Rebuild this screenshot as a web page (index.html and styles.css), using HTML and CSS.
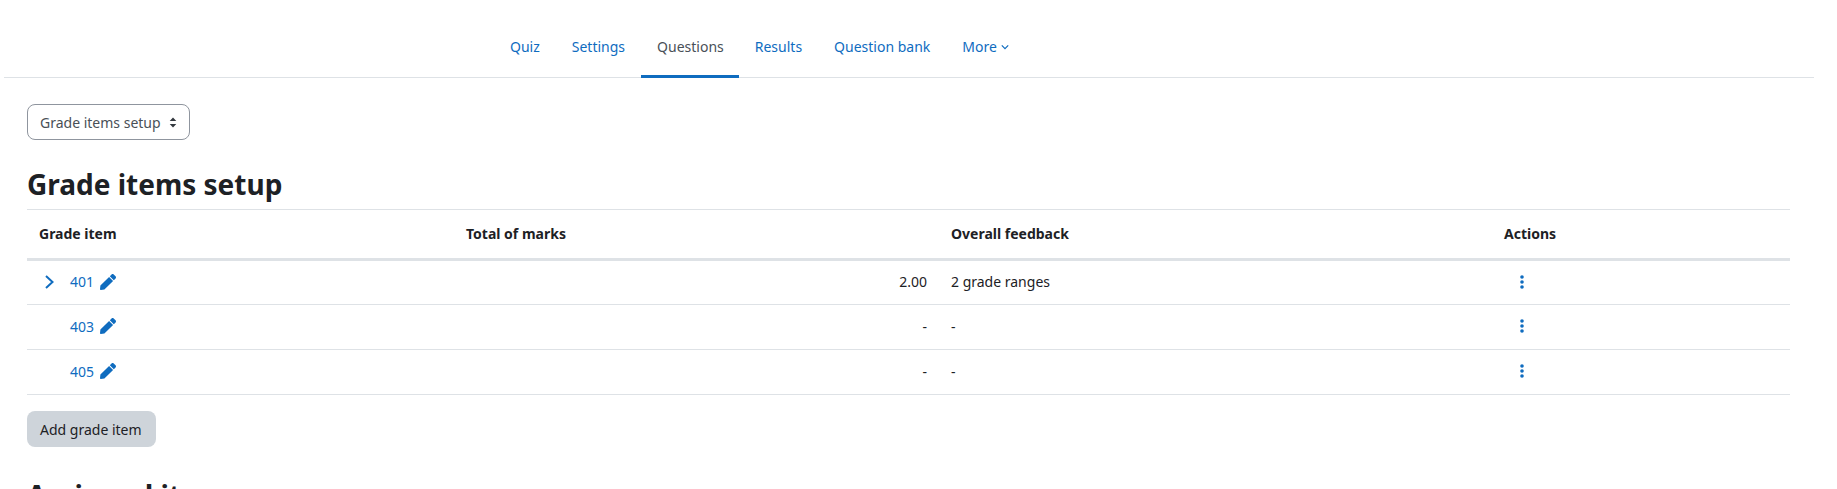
FILE: index.html
```html
<!DOCTYPE html>
<html lang="en">
<head>
<meta charset="utf-8">
<title>Grade items setup</title>
<link rel="stylesheet" href="styles.css">
</head>
<body>
<nav class="tabs">
  <a class="tab" href="#">Quiz</a>
  <a class="tab" href="#">Settings</a>
  <a class="tab active" href="#">Questions</a>
  <a class="tab" href="#">Results</a>
  <a class="tab" href="#">Question bank</a>
  <a class="tab" href="#">More <svg class="caret" viewBox="0 0 10 10" width="8" height="8"><path d="M1 3l4 4 4-4" fill="none" stroke="currentColor" stroke-width="1.5"/></svg></a>
</nav>
<main class="content">
  <button class="select">Grade items setup
    <svg class="updown" viewBox="0 0 10 14" width="8" height="11"><path d="M5 0.5L9.2 5H0.8zM5 13.5L0.8 9H9.2z" fill="#343a40"/></svg>
  </button>
  <h2 class="title">Grade items setup</h2>
  <table class="grades">
    <thead>
      <tr><th class="c1">Grade item</th><th class="c2">Total of marks</th><th class="c3">Overall feedback</th><th>Actions</th></tr>
    </thead>
    <tbody>
      <tr>
        <td><span class="item"><span class="exp"><svg viewBox="0 0 12 16" width="12" height="16"><path d="M3 2l6.500 6-6.500 6" fill="none" stroke="#0f6cbf" stroke-width="2"/></svg></span><a href="#">401</a><svg class="pen" viewBox="0 0 512 512" width="16" height="16"><path d="M290.7 93.2l128 128-278 278-114.100 12.600c-15.300 1.700-28.200-11.200-26.500-26.500l12.700-114.200zM497.900 74.200l-60.100-60.100c-18.700-18.700-49.100-18.700-67.900 0l-56.500 56.500 128 128 56.500-56.500c18.800-18.800 18.800-49.200 0-67.900z" fill="#0f6cbf"/></svg></span></td>
        <td class="num">2.00</td><td>2 grade ranges</td>
        <td><svg class="dots" viewBox="0 0 4 14" width="4" height="14"><circle cx="2" cy="2" r="1.8"/><circle cx="2" cy="7" r="1.8"/><circle cx="2" cy="12" r="1.8"/></svg></td>
      </tr>
      <tr>
        <td><span class="item"><span class="exp"></span><a href="#">403</a><svg class="pen" viewBox="0 0 512 512" width="16" height="16"><path d="M290.7 93.2l128 128-278 278-114.100 12.600c-15.300 1.700-28.200-11.200-26.500-26.500l12.700-114.200zM497.900 74.200l-60.100-60.100c-18.700-18.700-49.100-18.700-67.900 0l-56.500 56.500 128 128 56.500-56.500c18.800-18.800 18.800-49.200 0-67.900z" fill="#0f6cbf"/></svg></span></td>
        <td class="num">-</td><td>-</td>
        <td><svg class="dots" viewBox="0 0 4 14" width="4" height="14"><circle cx="2" cy="2" r="1.8"/><circle cx="2" cy="7" r="1.8"/><circle cx="2" cy="12" r="1.8"/></svg></td>
      </tr>
      <tr>
        <td><span class="item"><span class="exp"></span><a href="#">405</a><svg class="pen" viewBox="0 0 512 512" width="16" height="16"><path d="M290.7 93.2l128 128-278 278-114.100 12.600c-15.300 1.700-28.200-11.200-26.500-26.500l12.700-114.200zM497.900 74.200l-60.100-60.100c-18.700-18.700-49.100-18.700-67.900 0l-56.500 56.500 128 128 56.500-56.500c18.800-18.800 18.800-49.200 0-67.900z" fill="#0f6cbf"/></svg></span></td>
        <td class="num">-</td><td>-</td>
        <td><svg class="dots" viewBox="0 0 4 14" width="4" height="14"><circle cx="2" cy="2" r="1.8"/><circle cx="2" cy="7" r="1.8"/><circle cx="2" cy="12" r="1.8"/></svg></td>
      </tr>
    </tbody>
  </table>
  <button class="add">Add grade item</button>
  <h2 class="title second">Assigned items</h2>
</main>
</body>
</html>
```
FILE: styles.css
```css
html, body { margin: 0; padding: 0; height: 489px; overflow: hidden; background: #fff; }
body { font-family: "Noto Sans", sans-serif; font-size: 14px; color: #1d2125; }
.tabs { margin: 0 23px 0 4px; height: 77px; border-bottom: 1px solid #dee2e6; display: flex; align-items: stretch; padding-left: 490px; box-sizing: content-box; }
.tab { display: flex; align-items: center; gap: 4px; padding: 17px 16px 0; text-decoration: none; color: #0f6cbf; border-bottom: 3px solid transparent; margin-bottom: -1px; }
.tab.active { color: #495057; border-bottom-color: #0f6cbf; padding-right: 15px; }
.caret { margin-top: 2px; }
.content { padding: 26px 46px 0 27px; }
.select { display: flex; align-items: center; gap: 8px; height: 36px; padding: 0 12px; font: inherit; color: #495057; background: #fff; border: 1px solid #8f959e; border-radius: 8px; }
.title { margin: 26px 0 0; font-size: 28px; line-height: 36px; font-weight: 700; color: #1d2125; }
.grades { width: 1763px; margin-top: 7px; border-collapse: collapse; table-layout: fixed; }
.grades th { text-align: left; font-weight: 700; padding: 0 12px 1px; height: 50px; box-sizing: border-box; border-top: 1px solid #dee2e6; border-bottom: 3px solid #dee2e6; }
.grades td { padding: 0 12px 2px; height: 45px; box-sizing: border-box; border-bottom: 1px solid #dee2e6; }
.c1 { width: 427px; }
.c2 { width: 485px; }
.c3 { width: 553px; }
.grades td.num { text-align: right; }
.item { display: flex; align-items: center; }
.exp { width: 31px; display: flex; padding-left: 4px; box-sizing: border-box; }
.item a { color: #0f6cbf; text-decoration: none; }
.pen { margin-left: 6px; }
.dots { fill: #0f6cbf; display: block; margin-left: 16px; }
.add { display: block; margin-top: 16px; height: 36px; padding: 0 14px 0 13px; font: inherit; color: #1d2125; background: #ced4da; border: 0; border-radius: 8px; }
.second { margin: 30px 0 0; height: 12px; overflow: visible; }
```
